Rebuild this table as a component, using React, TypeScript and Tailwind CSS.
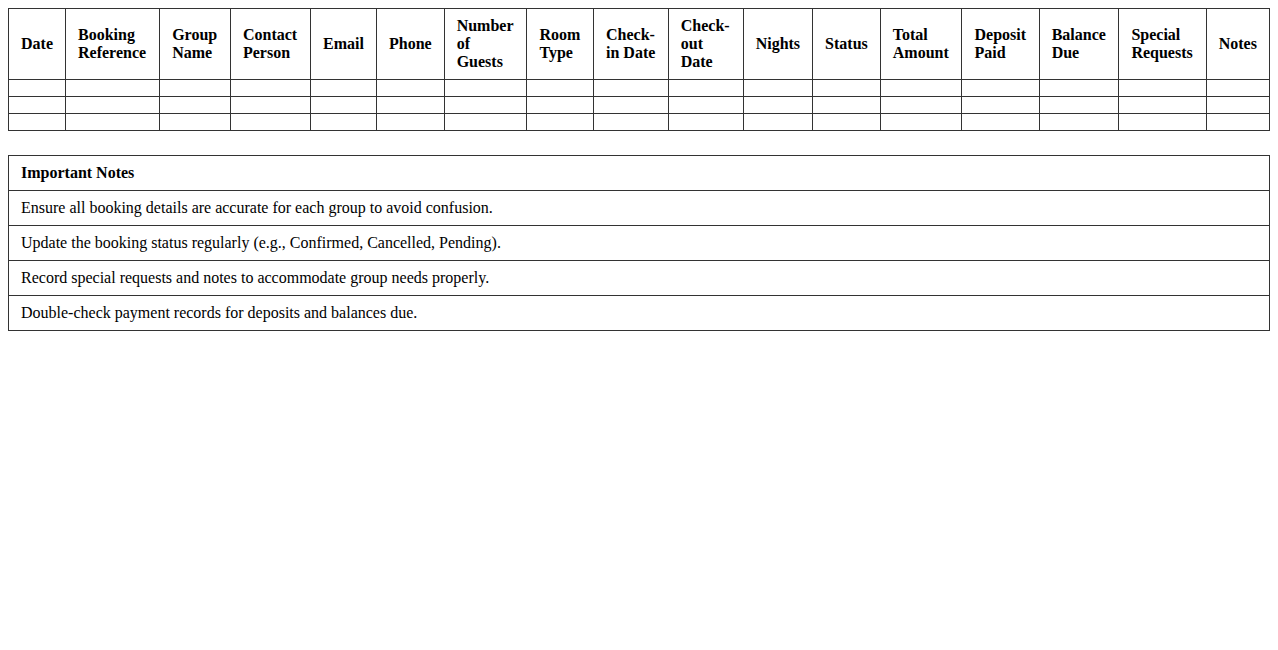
import React from 'react'

const columns = [
  'Date',
  'Booking Reference',
  'Group Name',
  'Contact Person',
  'Email',
  'Phone',
  'Number of Guests',
  'Room Type',
  'Check-in Date',
  'Check-out Date',
  'Nights',
  'Status',
  'Total Amount',
  'Deposit Paid',
  'Balance Due',
  'Special Requests',
  'Notes',
]

const notes = [
  'Ensure all booking details are accurate for each group to avoid confusion.',
  'Update the booking status regularly (e.g., Confirmed, Cancelled, Pending).',
  'Record special requests and notes to accommodate group needs properly.',
  'Double-check payment records for deposits and balances due.',
]

export default function App() {
  return (
    <div className="p-2 bg-white text-black text-base leading-normal" style={{ fontFamily: '"Liberation Serif", "Times New Roman", serif', lineHeight: 'normal' }}>
      <table className="w-full border-collapse">
        <thead>
          <tr>
            {columns.map((col) => (
              <th key={col} className="border border-[#333] px-3 py-2 text-left align-middle font-bold">
                {col}
              </th>
            ))}
          </tr>
        </thead>
        <tbody>
          {[0, 1, 2].map((r) => (
            <tr key={r}>
              {columns.map((col) => (
                <td key={col} className="border border-[#333] px-3 py-2"></td>
              ))}
            </tr>
          ))}
        </tbody>
      </table>

      <table className="w-full border-collapse mt-6">
        <thead>
          <tr>
            <th className="border border-[#333] px-3 py-2 text-left font-bold">Important Notes</th>
          </tr>
        </thead>
        <tbody>
          {notes.map((n) => (
            <tr key={n}>
              <td className="border border-[#333] px-3 py-2">{n}</td>
            </tr>
          ))}
        </tbody>
      </table>
    </div>
  )
}
